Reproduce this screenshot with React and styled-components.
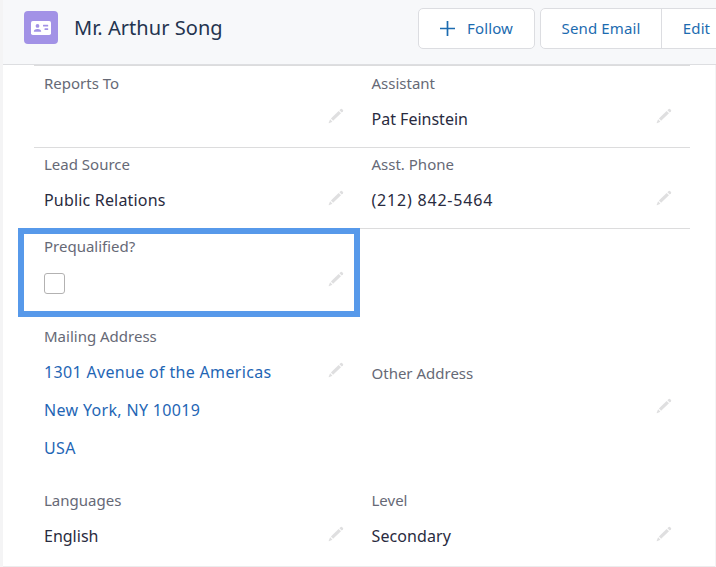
import React from "react";
import styled, { createGlobalStyle } from "styled-components";

const GlobalStyle = createGlobalStyle`
  * { box-sizing: border-box; }
  body {
    margin: 0;
    background: #f4f4f5;
    font-family: "Noto Sans", "Open Sans", sans-serif;
    overflow: hidden;
  }
`;

const Page = styled.div`
  height: 567px;
  padding: 0 1px 0 3px;
  overflow: hidden;
`;

const Panel = styled.main`
  height: 567px;
  background: #fff;
  border-bottom: 1px solid #ececed;
`;

const Header = styled.header`
  height: 65px;
  display: flex;
  align-items: flex-start;
  padding: 8px 0 0 21px;
  margin-right: -1px;
  background: #f7f8fa;
  border-bottom: 1px solid #dddee1;
  overflow: hidden;
`;

const Avatar = styled.div`
  flex: none;
  width: 34px;
  height: 33px;
  margin: 3px 16px 0 0;
  border-radius: 4px;
  background: #a292e6;
  display: flex;
  align-items: center;
  justify-content: center;
`;

const Title = styled.h1`
  flex: 1;
  margin: 6px 0 0;
  font-size: 20px;
  line-height: 28px;
  font-weight: 400;
  letter-spacing: 0.05px;
  color: #24344f;
  white-space: nowrap;
`;

const Button = styled.button`
  flex: none;
  width: ${(p) => p.$width}px;
  height: 41px;
  padding: 0 0 1px;
  display: flex;
  align-items: center;
  justify-content: center;
  gap: 12px;
  border: 1px solid #dcdde1;
  border-radius: 5px;
  background: #fff;
  color: #1c6bb0;
  font: 400 15px/24px "Noto Sans", sans-serif;
  letter-spacing: 0.12px;
  white-space: nowrap;
`;

const ButtonGroup = styled.div`
  flex: none;
  display: flex;
  width: 176px;
  margin-left: 5px;
  overflow: hidden;

  ${Button}:first-child { border-radius: 5px 0 0 5px; }
  ${Button} + ${Button} { margin-left: -1px; border-radius: 0; }
`;

const Details = styled.div`
  padding: 0 25px 0 31px;
`;

const Row = styled.section`
  height: ${(p) => p.$height}px;
  padding-top: ${(p) => p.$top || 7}px;
  display: grid;
  grid-template-columns: 327.5px 328px;
  border-top: 1px solid ${(p) => (p.$divided ? "#dcdcdd" : "transparent")};
`;

const Field = styled.div`
  position: relative;
  padding: ${(p) => p.$offset || 0}px 18px 0 10px;
`;

const Label = styled.div`
  font-size: 15px;
  line-height: 20px;
  margin: ${(p) => -p.$lift}px 0 ${(p) => p.$lift}px;
  color: #666976;
  white-space: nowrap;
`;

const ValueRow = styled.div`
  display: flex;
  justify-content: space-between;
  align-items: flex-start;
  padding-top: 6px;
`;

const Value = styled.div`
  font-size: 16px;
  line-height: 38px;
  letter-spacing: ${(p) => p.$spacing || 0}px;
  color: ${(p) => (p.$link ? "#1f66b5" : "#292b40")};
  white-space: nowrap;
`;

const Checkbox = styled.span`
  display: block;
  width: 21px;
  height: 21px;
  margin-top: 11px;
  border: 1px solid #b3b2b2;
  border-radius: 3px;
  background: #fff;
`;

const Highlight = styled.div`
  position: absolute;
  top: -8px;
  left: -16px;
  width: 342px;
  height: 89px;
  border: 6px solid #5799ea;
  pointer-events: none;
`;

const PencilSvg = styled.svg`
  flex: none;
  margin: ${(p) => p.$top}px 0 0 auto;
  fill: #dfdfe0;
`;

function Pencil({ top = 0 }) {
  return (
    <PencilSvg $top={top} width="16" height="16" viewBox="0 0 16 16">
      <path d="M10.6 3 13 5.2 5.1 12.7 2.9 10.4Z" />
      <path d="m11.4 2.2 1.3-1.2q.6-.5 1.2 0l1.1 1.1q.5.6 0 1.2L13.8 4.4Z" />
      <path d="M2.1 11.3.6 14.9q0 .5.5.4l3.3-1.5Z" />
    </PencilSvg>
  );
}

function DetailField({ label, lines = [], link, offset, pencilTop = 9, lift = 1, spacing, children }) {
  return (
    <Field $offset={offset}>
      <Label $lift={lift}>{label}</Label>
      <ValueRow>
        <div>
          {lines.map((line) => (
            <Value key={line} $link={link} $spacing={spacing}>{line}</Value>
          ))}
          {children}
        </div>
        <Pencil top={pencilTop} />
      </ValueRow>
    </Field>
  );
}

export default function App() {
  return (
    <Page>
      <GlobalStyle />
      <Panel>
        <Header>
          <Avatar>
            <svg width="20" height="14" viewBox="0 0 20 14">
              <rect width="20" height="14" rx="1.8" fill="#fff" />
              <g fill="#a292e6">
                <circle cx="6.5" cy="4.9" r="1.9" />
                <path d="M2.8 10.8c0-2 1.3-2.9 3.7-2.9s3.7.9 3.7 2.9Z" />
                <rect x="12" y="3.7" width="5.2" height="1.8" rx=".5" />
                <rect x="13.5" y="7.3" width="3.7" height="1.8" rx=".5" />
              </g>
            </svg>
          </Avatar>
          <Title>Mr. Arthur Song</Title>
          <Button $width={117}>
            <svg width="15" height="15" viewBox="0 0 15 15">
              <path d="M7.5 0v15M0 7.5h15" stroke="#1c6bb0" strokeWidth="1.7" />
            </svg>
            Follow
          </Button>
          <ButtonGroup>
            <Button $width={122}>Send Email</Button>
            <Button $width={71}>Edit</Button>
          </ButtonGroup>
        </Header>
        <Details>
          <Row $height={82} $top={8} $divided>
            <DetailField label="Reports To" pencilTop={8} />
            <DetailField label="Assistant" lines={["Pat Feinstein"]} pencilTop={8} />
          </Row>
          <Row $height={81} $divided>
            <DetailField label="Lead Source" lines={["Public Relations"]} spacing={0.18} />
            <DetailField label="Asst. Phone" lines={["(212) 842-5464"]} spacing={0.8} />
          </Row>
          <Row $height={91} $divided>
            <DetailField label="Prequalified?" lift={0}>
              <Checkbox role="checkbox" aria-checked="false" />
              <Highlight />
            </DetailField>
          </Row>
          <Row $height={164}>
            <DetailField
              label="Mailing Address"
              lines={["1301 Avenue of the Americas", "New York, NY 10019", "USA"]}
              link
              spacing={0.33}
            />
            <DetailField label="Other Address" offset={37} pencilTop={8} />
          </Row>
          <Row $height={83}>
            <DetailField label="Languages" lines={["English"]} />
            <DetailField label="Level" lines={["Secondary"]} spacing={0.1} />
          </Row>
        </Details>
      </Panel>
    </Page>
  );
}
